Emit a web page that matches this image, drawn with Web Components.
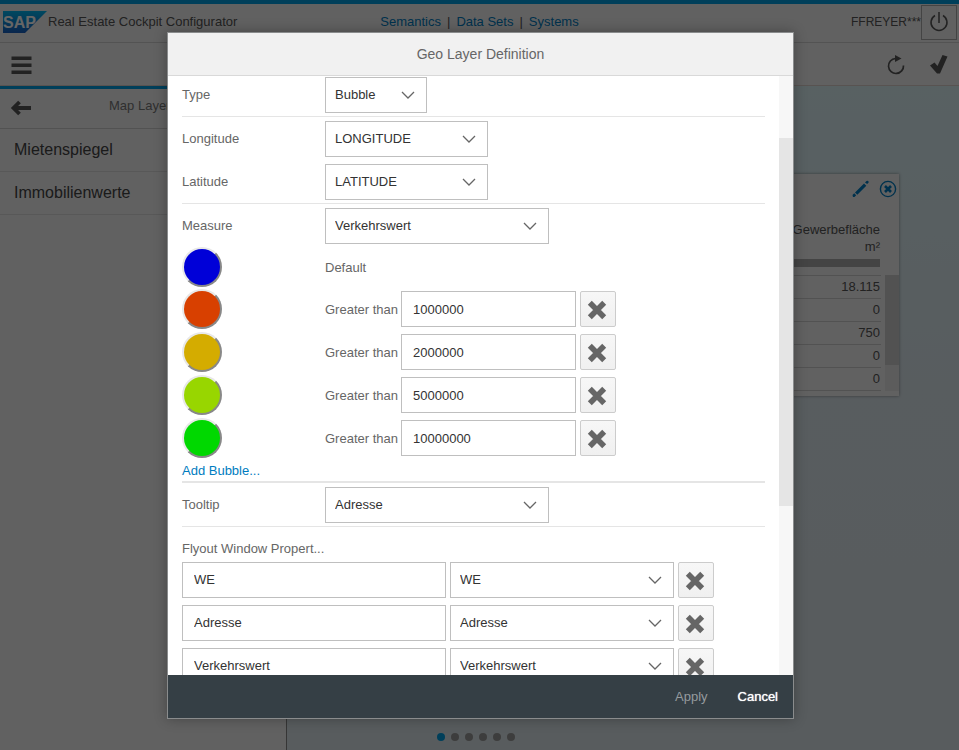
<!DOCTYPE html>
<html lang="en">
<head>
<meta charset="utf-8">
<title>Real Estate Cockpit Configurator</title>
<style>
    html, body {
        height: 100%;
        margin: 0;
    }

    body {
        font: 13px/16px "Liberation Sans", Arial, sans-serif;
        color: #555;
        overflow: hidden;
    }
</style>
</head>
<body>
<cockpit-app></cockpit-app>

<script>
    const ICONS = {
        menu: `<path d="M1.500 3.500h20V7h-20zM1.500 10.500h20V14h-20zM1.500 17.500h20V21h-20z"/>`,
        back: `<path d="M9.500 5 3.500 11l6 6M4 11h17" fill="none" stroke="currentColor" stroke-width="3.800"/>`,
        refresh: `<path d="M11.500 5.500a7.500 7.500 0 1 0 8 7" fill="none" stroke="currentColor" stroke-width="1.700"/><path d="M11 2 17.500 5.500 11 9z"/>`,
        accept: `<path d="M3 12.500 7.500 9.500 10.500 13 15.500 2 20.500 3.500 13 20.500H10z"/>`,
        power: `<path d="M7 4.500a8 8 0 1 0 8 0M11 1v11" fill="none" stroke="currentColor" stroke-width="1.500"/>`,
        edit: `<path d="m5 14.500 9-9 2.300 2.300-9 9zM2.500 17l1.700-1.800 2 2L4.500 19H3zM15 4.500l1.500-1.500q2-1 2.300 1.200L17.200 6z"/>`,
        close: `<circle cx="11" cy="11" r="7.600" fill="none" stroke="currentColor" stroke-width="1.400"/><path d="m8 8 6 6m0-6-6 6" stroke="currentColor" stroke-width="2.600"/>`,
        decline: `<path d="m3.800 3.800 14.400 14.400M18.200 3.800 3.800 18.200" stroke="currentColor" stroke-width="5.600"/>`,
        arrow: `<path d="m5 8 6 6 6-6" fill="none" stroke="currentColor" stroke-width="1.300"/>`
    };

    // Shared base: stamps the element's markup and styles into an open root
    class BaseElement extends HTMLElement {
        constructor() {
            super();
            this.attachShadow({ mode: "open" });
        }

        setTemplate(html) {
            const template = document.createElement("template");
            template.innerHTML = `<style>*, ::before { box-sizing: border-box; }</style>` + html;
            this.shadowRoot.appendChild(template.content.cloneNode(true));
        }
    }

    class UiIcon extends BaseElement {
        connectedCallback() {
            this.setTemplate(`
                <style>
                :host { display: inline-block; width: 22px; height: 22px; flex: none; }
                svg { display: block; width: 100%; height: 100%; fill: currentColor; }
                </style>
                <svg viewBox="0 0 22 22" aria-hidden="true">${ICONS[this.getAttribute("name")]}</svg>
            `);
        }
    }

    class UiSelect extends BaseElement {
        connectedCallback() {
            const value = this.getAttribute("value");
            this.setTemplate(`
                <style>
                :host { display: block; position: relative; height: 36px; flex: none; }
                :host([size="s"]) { width: 102px; }
                :host([size="m"]) { width: 163px; }
                :host([size="l"]) { width: 224px; }
                select {
                    appearance: none;
                    width: 100%;
                    height: 100%;
                    margin: 0;
                    padding: 0 36px 0 9px;
                    border: 1px solid #bfbfbf;
                    border-radius: 0;
                    background: #fff;
                    font: inherit;
                    color: #333;
                }
                ui-icon { position: absolute; right: 8px; top: 7px; color: #666; pointer-events: none; }
                </style>
                <select aria-label="${this.getAttribute("label")}"><option>${value}</option></select>
                <ui-icon name="arrow"></ui-icon>
            `);
        }
    }

    class UiInput extends BaseElement {
        connectedCallback() {
            this.setTemplate(`
                <style>
                :host { display: block; height: 36px; width: 175px; flex: none; }
                :host([wide]) { width: 264px; }
                input {
                    width: 100%;
                    height: 100%;
                    margin: 0;
                    padding: 0 11px;
                    border: 1px solid #bfbfbf;
                    background: #fff;
                    font: inherit;
                    color: #333;
                }
                </style>
                <input type="text" aria-label="${this.getAttribute("label")}" value="${this.getAttribute("value")}">
            `);
        }
    }

    class DeleteButton extends BaseElement {
        connectedCallback() {
            this.setTemplate(`
                <style>
                :host { display: block; width: 36px; height: 36px; flex: none; }
                button {
                    display: grid;
                    place-items: center;
                    width: 100%;
                    height: 100%;
                    padding: 2px 2px 0 0;
                    border: 1px solid #ccc;
                    border-radius: 2px;
                    background: linear-gradient(#f7f7f7, #f0f0f0);
                    color: #666;
                }
                </style>
                <button type="button" aria-label="Remove"><ui-icon name="decline"></ui-icon></button>
            `);
        }
    }

    class FormRow extends BaseElement {
        connectedCallback() {
            this.setTemplate(`
                <style>
                :host {
                    box-sizing: border-box;
                    display: grid;
                    grid-template-columns: 143px 1fr;
                    align-items: center;
                    height: 43px;
                    padding-top: 1px;
                    color: #666;
                }
                :host([line]) { height: 44px; border-bottom: 1px solid #e5e5e5; }
                .field { display: flex; align-items: center; gap: 4px; }
                </style>
                <span>${this.getAttribute("label")}</span>
                <div class="field"><slot></slot></div>
            `);
        }
    }

    class BubbleRow extends BaseElement {
        connectedCallback() {
            const value = this.getAttribute("value");
            const field = value
                ? `<span>Greater than</span>
                   <ui-input label="Greater than" value="${value}"></ui-input>
                   <delete-button></delete-button>`
                : `<span>Default</span>`;
            this.setTemplate(`
                <style>
                :host {
                    display: grid;
                    grid-template-columns: 143px 1fr;
                    align-items: center;
                    height: 43px;
                    color: #666;
                }
                :host(:not([value])) { height: 41px; }
                .color {
                    width: 40px;
                    height: 40px;
                    padding: 0;
                    border: 2px solid;
                    border-color: #e8e8e8 #888 #888 #e8e8e8;
                    border-radius: 50%;
                    background: ${this.getAttribute("color")};
                }
                .field { display: flex; align-items: center; gap: 4px; }
                span { width: 72px; padding-top: 2px; white-space: nowrap; }
                </style>
                <button type="button" class="color" aria-label="Bubble color"></button>
                <div class="field">${field}</div>
            `);
        }
    }

    class FlyoutRow extends BaseElement {
        connectedCallback() {
            const value = this.getAttribute("value");
            this.setTemplate(`
                <style>
                :host { display: flex; gap: 4px; height: 43px; }
                </style>
                <ui-input wide label="Property name" value="${value}"></ui-input>
                <ui-select size="l" label="Property field" value="${value}"></ui-select>
                <delete-button></delete-button>
            `);
        }
    }

    class GeoDialog extends BaseElement {
        connectedCallback() {
            this.setTemplate(`
                <style>
                :host {
                    position: absolute;
                    inset: 0;
                    display: grid;
                    grid-template-columns: minmax(0, 627px);
                    grid-template-rows: minmax(0, 687px);
                    place-content: center;
                    padding-left: 2px;
                    background: rgba(0, 0, 0, 0.6);
                }
                section {
                    display: flex;
                    flex-direction: column;
                    border: 1px solid #8a8c8d;
                    background: #fff;
                    box-shadow: 0 0 12px rgba(0, 0, 0, 0.3);
                }
                header {
                    flex: none;
                    height: 43px;
                    border-bottom: 1px solid #d9d9d9;
                    background: #f1f1f1;
                }
                h1 {
                    margin: 0;
                    font-size: 14px;
                    font-weight: normal;
                    line-height: 43px;
                    text-align: center;
                    color: #666;
                }
                .body { flex: 1; min-height: 0; display: flex; }
                .content { flex: 1; min-width: 0; overflow: hidden; padding: 0 14px; }
                .track { width: 14px; padding-top: 62px; background: #f7f7f7; }
                .thumb { height: 368px; background: #e5e5e5; }
                .first { margin-top: -3px; }
                .add { height: 23px; padding-top: 3px; border-bottom: 2px solid #e5e5e5; }
                a { color: #007cc0; text-decoration: none; }
                h2 { margin: 0; padding: 14px 0 5px; font: inherit; color: #666; }
                footer {
                    flex: none;
                    display: flex;
                    justify-content: flex-end;
                    gap: 30px;
                    height: 43px;
                    padding: 1px 15px 0 0;
                    background: #353f45;
                }
                footer button { padding: 0; border: 0; background: none; font: inherit; color: #fff; text-shadow: 0 0 1px #fff; }
                footer button:disabled { color: #969b9e; text-shadow: none; }
                </style>
                <section role="dialog" aria-label="Geo Layer Definition">
                    <header><h1>Geo Layer Definition</h1></header>
                    <div class="body">
                        <div class="content">
                            <form-row class="first" line label="Type"><ui-select size="s" label="Type" value="Bubble"></ui-select></form-row>
                            <form-row label="Longitude"><ui-select size="m" label="Longitude" value="LONGITUDE"></ui-select></form-row>
                            <form-row line label="Latitude"><ui-select size="m" label="Latitude" value="LATITUDE"></ui-select></form-row>
                            <form-row label="Measure"><ui-select size="l" label="Measure" value="Verkehrswert"></ui-select></form-row>
                            <bubble-row color="#0000d8"></bubble-row>
                            <bubble-row color="#d84000" value="1000000"></bubble-row>
                            <bubble-row color="#d4ac00" value="2000000"></bubble-row>
                            <bubble-row color="#98d600" value="5000000"></bubble-row>
                            <bubble-row color="#00d800" value="10000000"></bubble-row>
                            <div class="add"><a href="#">Add Bubble...</a></div>
                            <form-row line label="Tooltip"><ui-select size="l" label="Tooltip" value="Adresse"></ui-select></form-row>
                            <h2>Flyout Window Propert...</h2>
                            <flyout-row value="WE"></flyout-row>
                            <flyout-row value="Adresse"></flyout-row>
                            <flyout-row value="Verkehrswert"></flyout-row>
                        </div>
                        <div class="track"><div class="thumb"></div></div>
                    </div>
                    <footer>
                        <button type="button" disabled>Apply</button>
                        <button type="button">Cancel</button>
                    </footer>
                </section>
            `);
        }
    }

    class SapLogo extends BaseElement {
        connectedCallback() {
            this.setTemplate(`
                <style>
                :host { display: block; width: 44px; height: 22px; flex: none; }
                svg { display: block; }
                text { font: bold 16px "Liberation Sans", Arial, sans-serif; fill: #fff; }
                </style>
                <svg width="44" height="22" viewBox="0 0 44 22" role="img" aria-label="SAP">
                    <defs>
                        <linearGradient id="g" x2="0" y2="1">
                            <stop stop-color="#00b5f0"/>
                            <stop offset="1" stop-color="#1a5fc0"/>
                        </linearGradient>
                    </defs>
                    <path d="M0 0h44L22 22H0z" fill="url(#g)"/>
                    <text x="0" y="17">SAP</text>
                </svg>
            `);
        }
    }

    class ShellHeader extends BaseElement {
        connectedCallback() {
            this.setTemplate(`
                <style>
                :host {
                    box-sizing: border-box;
                    display: grid;
                    grid-template-columns: 1fr auto 1fr;
                    align-items: center;
                    height: 43px;
                    border-top: 4px solid #009de0;
                    border-bottom: 1px solid #d0d0d0;
                    background: #f2f2f2;
                    padding-bottom: 2px;
                }
                .brand { display: flex; align-items: center; gap: 1px; padding-left: 3px; }
                nav { display: flex; gap: 6px; }
                a { color: #007cc0; text-decoration: none; }
                .user {
                    display: flex;
                    align-items: center;
                    justify-content: flex-end;
                    padding-right: 2px;
                    font-size: 12px;
                }
                button {
                    display: grid;
                    place-items: center;
                    width: 36px;
                    height: 35px;
                    padding: 0;
                    border: 1px solid #aaa;
                    background: none;
                    color: #555;
                }
                </style>
                <div class="brand"><sap-logo></sap-logo><span>Real Estate Cockpit Configurator</span></div>
                <nav>
                    <a href="#">Semantics</a><span>|</span>
                    <a href="#">Data Sets</a><span>|</span>
                    <a href="#">Systems</a>
                </nav>
                <div class="user">
                    <span>FFREYER***</span>
                    <button type="button" aria-label="Log off"><ui-icon name="power"></ui-icon></button>
                </div>
            `);
        }
    }

    class ToolBar extends BaseElement {
        connectedCallback() {
            this.setTemplate(`
                <style>
                :host {
                    box-sizing: border-box;
                    display: flex;
                    align-items: center;
                    gap: 21px;
                    height: 43px;
                    padding: 0 10px;
                    border-bottom: 1px solid #dccfca;
                    background: #f2f2f2;
                }
                button { padding: 0; border: 0; background: none; color: #555; line-height: 0; }
                .menu { margin-right: auto; }
                </style>
                <button type="button" class="menu" aria-label="Menu"><ui-icon name="menu"></ui-icon></button>
                <button type="button" aria-label="Refresh"><ui-icon name="refresh"></ui-icon></button>
                <button type="button" aria-label="Save"><ui-icon name="accept"></ui-icon></button>
            `);
        }
    }

    class LayerList extends BaseElement {
        connectedCallback() {
            this.setTemplate(`
                <style>
                :host {
                    box-sizing: border-box;
                    display: block;
                    width: 287px;
                    border-top: 3px solid #009de0;
                    border-right: 1px solid #888;
                    background: #f2f2f2;
                }
                .head {
                    display: grid;
                    grid-template-columns: 22px 1fr 22px;
                    align-items: center;
                    height: 40px;
                    padding: 0 10px 2px;
                    border-bottom: 1px solid #ccc;
                }
                .head span { padding-bottom: 4px; text-align: center; color: #777; }
                button { padding: 0; border: 0; background: none; color: #555; line-height: 0; }
                ul { margin: 0; padding: 0; list-style: none; }
                li { height: 43px; padding: 0 14px; border-bottom: 1px solid #ddd; font-size: 16px; line-height: 42px; color: #444; }
                </style>
                <div class="head">
                    <button type="button" aria-label="Back"><ui-icon name="back"></ui-icon></button>
                    <span>Map Layers</span>
                </div>
                <ul>
                    <li>Mietenspiegel</li>
                    <li>Immobilienwerte</li>
                </ul>
            `);
        }
    }

    class DataTile extends BaseElement {
        connectedCallback() {
            const values = ["18.115", "0", "750", "0", "0"];
            this.setTemplate(`
                <style>
                :host {
                    display: block;
                    width: 200px;
                    height: 222px;
                    background: #f2f2f2;
                    box-shadow: 0 0 3px rgba(0, 0, 0, 0.4);
                }
                .tools { display: flex; justify-content: flex-end; gap: 5px; height: 47px; padding: 4px 0; color: #007cc0; }
                .body { display: flex; height: 170px; }
                table { flex: 1; height: 170px; border-collapse: collapse; text-align: right; }
                th, td { padding: 0 1px 0 0; }
                th { height: 54px; font-weight: normal; line-height: 17px; vertical-align: top; }
                th::after { content: ""; display: block; height: 8px; margin-top: 4px; background: #aaa; }
                td { height: 23px; border-top: 1px solid #ccc; border-bottom: 1px solid #ccc; line-height: 20px; }
                .track { width: 14px; margin: 54px 0 0 4px; background: #e6e6e6; }
                .thumb { height: 90px; background: #ccc; }
                </style>
                <div class="tools"><ui-icon name="edit"></ui-icon><ui-icon name="close"></ui-icon></div>
                <div class="body">
                    <table>
                        <thead><tr><th>Gewerbefläche<br>m²</th></tr></thead>
                        <tbody>${values.map(v => `<tr><td>${v}</td></tr>`).join("")}</tbody>
                    </table>
                    <div class="track"><div class="thumb"></div></div>
                </div>
            `);
        }
    }

    class TileBoard extends BaseElement {
        connectedCallback() {
            this.setTemplate(`
                <style>
                :host {
                    display: flex;
                    flex-direction: column;
                    align-items: flex-end;
                    justify-content: space-between;
                    background: linear-gradient(#dcf2f6, #dde8ee 45%, #dde6ea);
                }
                data-tile { margin: 88px 60px 0 0; }
                .pages { display: flex; gap: 6px; align-self: flex-start; padding: 0 0 9px 150px; }
                i { width: 8px; height: 8px; border-radius: 50%; background: #999; }
                i:first-child { background: #009de0; }
                </style>
                <data-tile></data-tile>
                <div class="pages"><i></i><i></i><i></i><i></i><i></i><i></i></div>
            `);
        }
    }

    class CockpitApp extends BaseElement {
        connectedCallback() {
            this.setTemplate(`
                <style>
                :host { display: flex; flex-direction: column; height: 100vh; position: relative; }
                main { flex: 1; min-height: 0; display: flex; }
                tile-board { flex: 1; min-width: 0; }
                </style>
                <shell-header></shell-header>
                <tool-bar></tool-bar>
                <main>
                    <layer-list></layer-list>
                    <tile-board></tile-board>
                </main>
                <geo-dialog></geo-dialog>
            `);
        }
    }

    customElements.define("ui-icon", UiIcon);
    customElements.define("ui-select", UiSelect);
    customElements.define("ui-input", UiInput);
    customElements.define("delete-button", DeleteButton);
    customElements.define("form-row", FormRow);
    customElements.define("bubble-row", BubbleRow);
    customElements.define("flyout-row", FlyoutRow);
    customElements.define("geo-dialog", GeoDialog);
    customElements.define("sap-logo", SapLogo);
    customElements.define("shell-header", ShellHeader);
    customElements.define("tool-bar", ToolBar);
    customElements.define("layer-list", LayerList);
    customElements.define("data-tile", DataTile);
    customElements.define("tile-board", TileBoard);
    customElements.define("cockpit-app", CockpitApp);
</script>
</body>
</html>
